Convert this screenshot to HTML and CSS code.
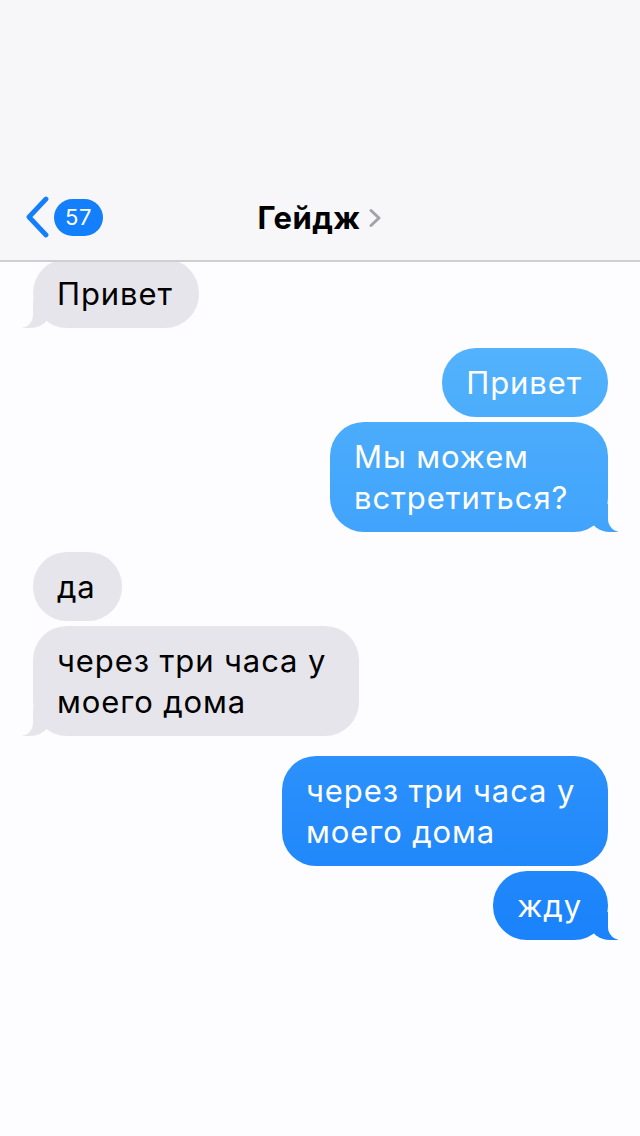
FILE: index.html
```html
<!DOCTYPE html>
<html lang="ru">
<head>
<meta charset="utf-8">
<title>Гейдж</title>
<link rel="stylesheet" href="styles.css">
</head>
<body>
<div class="screen">
  <header class="topbar">
    <div class="status"></div>
    <nav class="nav">
      <div class="back">
        <svg class="back-chevron" width="26" height="42" viewBox="0 0 26 42" aria-hidden="true">
          <path d="M22 3 L5 21 L22 39" fill="none" stroke="#147ffa" stroke-width="4.8" stroke-linecap="round" stroke-linejoin="round"/>
        </svg>
        <span class="badge">57</span>
      </div>
      <div class="title">
        <span class="name">Гейдж</span>
        <svg class="title-chevron" width="14" height="20" viewBox="0 0 14 20" aria-hidden="true">
          <path d="M3 2.5 L11 10 L3 17.5" fill="none" stroke="#a3a3a8" stroke-width="3" stroke-linecap="round" stroke-linejoin="round"/>
        </svg>
      </div>
    </nav>
  </header>

  <main class="chat">
    <div class="group in">
      <div class="bubble tail">Привет</div>
    </div>
    <div class="group out">
      <div class="bubble">Привет</div>
      <div class="bubble tail wide">Мы можем встретиться?</div>
    </div>
    <div class="group in">
      <div class="bubble">да</div>
      <div class="bubble tail">через три часа у моего дома</div>
    </div>
    <div class="group out">
      <div class="bubble">через три часа у моего дома</div>
      <div class="bubble tail">жду</div>
    </div>
  </main>
</div>
</body>
</html>
```

FILE: styles.css
```css
* {
  box-sizing: border-box;
}

html, body {
  margin: 0;
  padding: 0;
}

body {
  background: #fdfdff;
  font-family: "Inter", "Liberation Sans", sans-serif;
  color: #000;
}

.screen {
  width: 640px;
  height: 1136px;
  overflow: hidden;
  background: #fdfdff;
}

.topbar {
  position: relative;
  z-index: 2;
  background: #f7f7f9;
  border-bottom: 2px solid #cfcfd2;
}

.status {
  height: 180px;
}

.nav {
  height: 80px;
  display: grid;
  grid-template-columns: 1fr auto 1fr;
  align-items: center;
}

.back {
  display: flex;
  align-items: center;
  padding-left: 24px;
  padding-bottom: 6px;
}

.back-chevron {
  display: block;
}

.badge {
  margin-left: 4px;
  min-width: 49px;
  height: 37px;
  border-radius: 19px;
  background: #137ffb;
  color: #fff;
  font-size: 22px;
  line-height: 37px;
  text-align: center;
  letter-spacing: 0.5px;
}

.title {
  display: flex;
  align-items: center;
  gap: 8px;
  padding-bottom: 6px;
}

.name {
  font-size: 31px;
  font-weight: 700;
  letter-spacing: 0.4px;
}

.title-chevron {
  display: block;
  margin-top: 2px;
}

.chat {
  margin-top: -3px;
  padding: 0 32px 0 33px;
  display: flex;
  flex-direction: column;
  gap: 20px;
}

.group {
  display: flex;
  flex-direction: column;
  gap: 5px;
}

.group.in {
  align-items: flex-start;
}

.group.out {
  align-items: flex-end;
}

.bubble {
  position: relative;
  max-width: 326px;
  padding: 14px 26px 14px 24px;
  border-radius: 34px;
  font-size: 31px;
  line-height: 41px;
  letter-spacing: 0.9px;
}

.in .bubble {
  background: #e6e5eb;
  color: #000;
}

.out .bubble,
.out .bubble.tail::before {
  background-image: linear-gradient(180deg, #74d0fc 0px, #52b2fc 350px, #1a82fb 940px, #066ffb 1136px);
  background-attachment: fixed;
}

.out .bubble {
  color: #fff;
}

.bubble.wide {
  max-width: 278px;
}

.bubble.tail::before,
.bubble.tail::after {
  content: "";
  position: absolute;
  bottom: 0;
  height: 28px;
}

.in .bubble.tail::before {
  left: -11px;
  width: 28px;
  background: #e6e5eb;
  border-bottom-right-radius: 20px 16px;
}

.in .bubble.tail::after {
  left: -30px;
  width: 30px;
  background: #fdfdff;
  border-bottom-right-radius: 13px;
}

.out .bubble.tail::before {
  right: -10px;
  width: 28px;
  border-bottom-left-radius: 20px 16px;
}

.out .bubble.tail::after {
  right: -30px;
  width: 30px;
  background: #fdfdff;
  border-bottom-left-radius: 13px;
}
```
